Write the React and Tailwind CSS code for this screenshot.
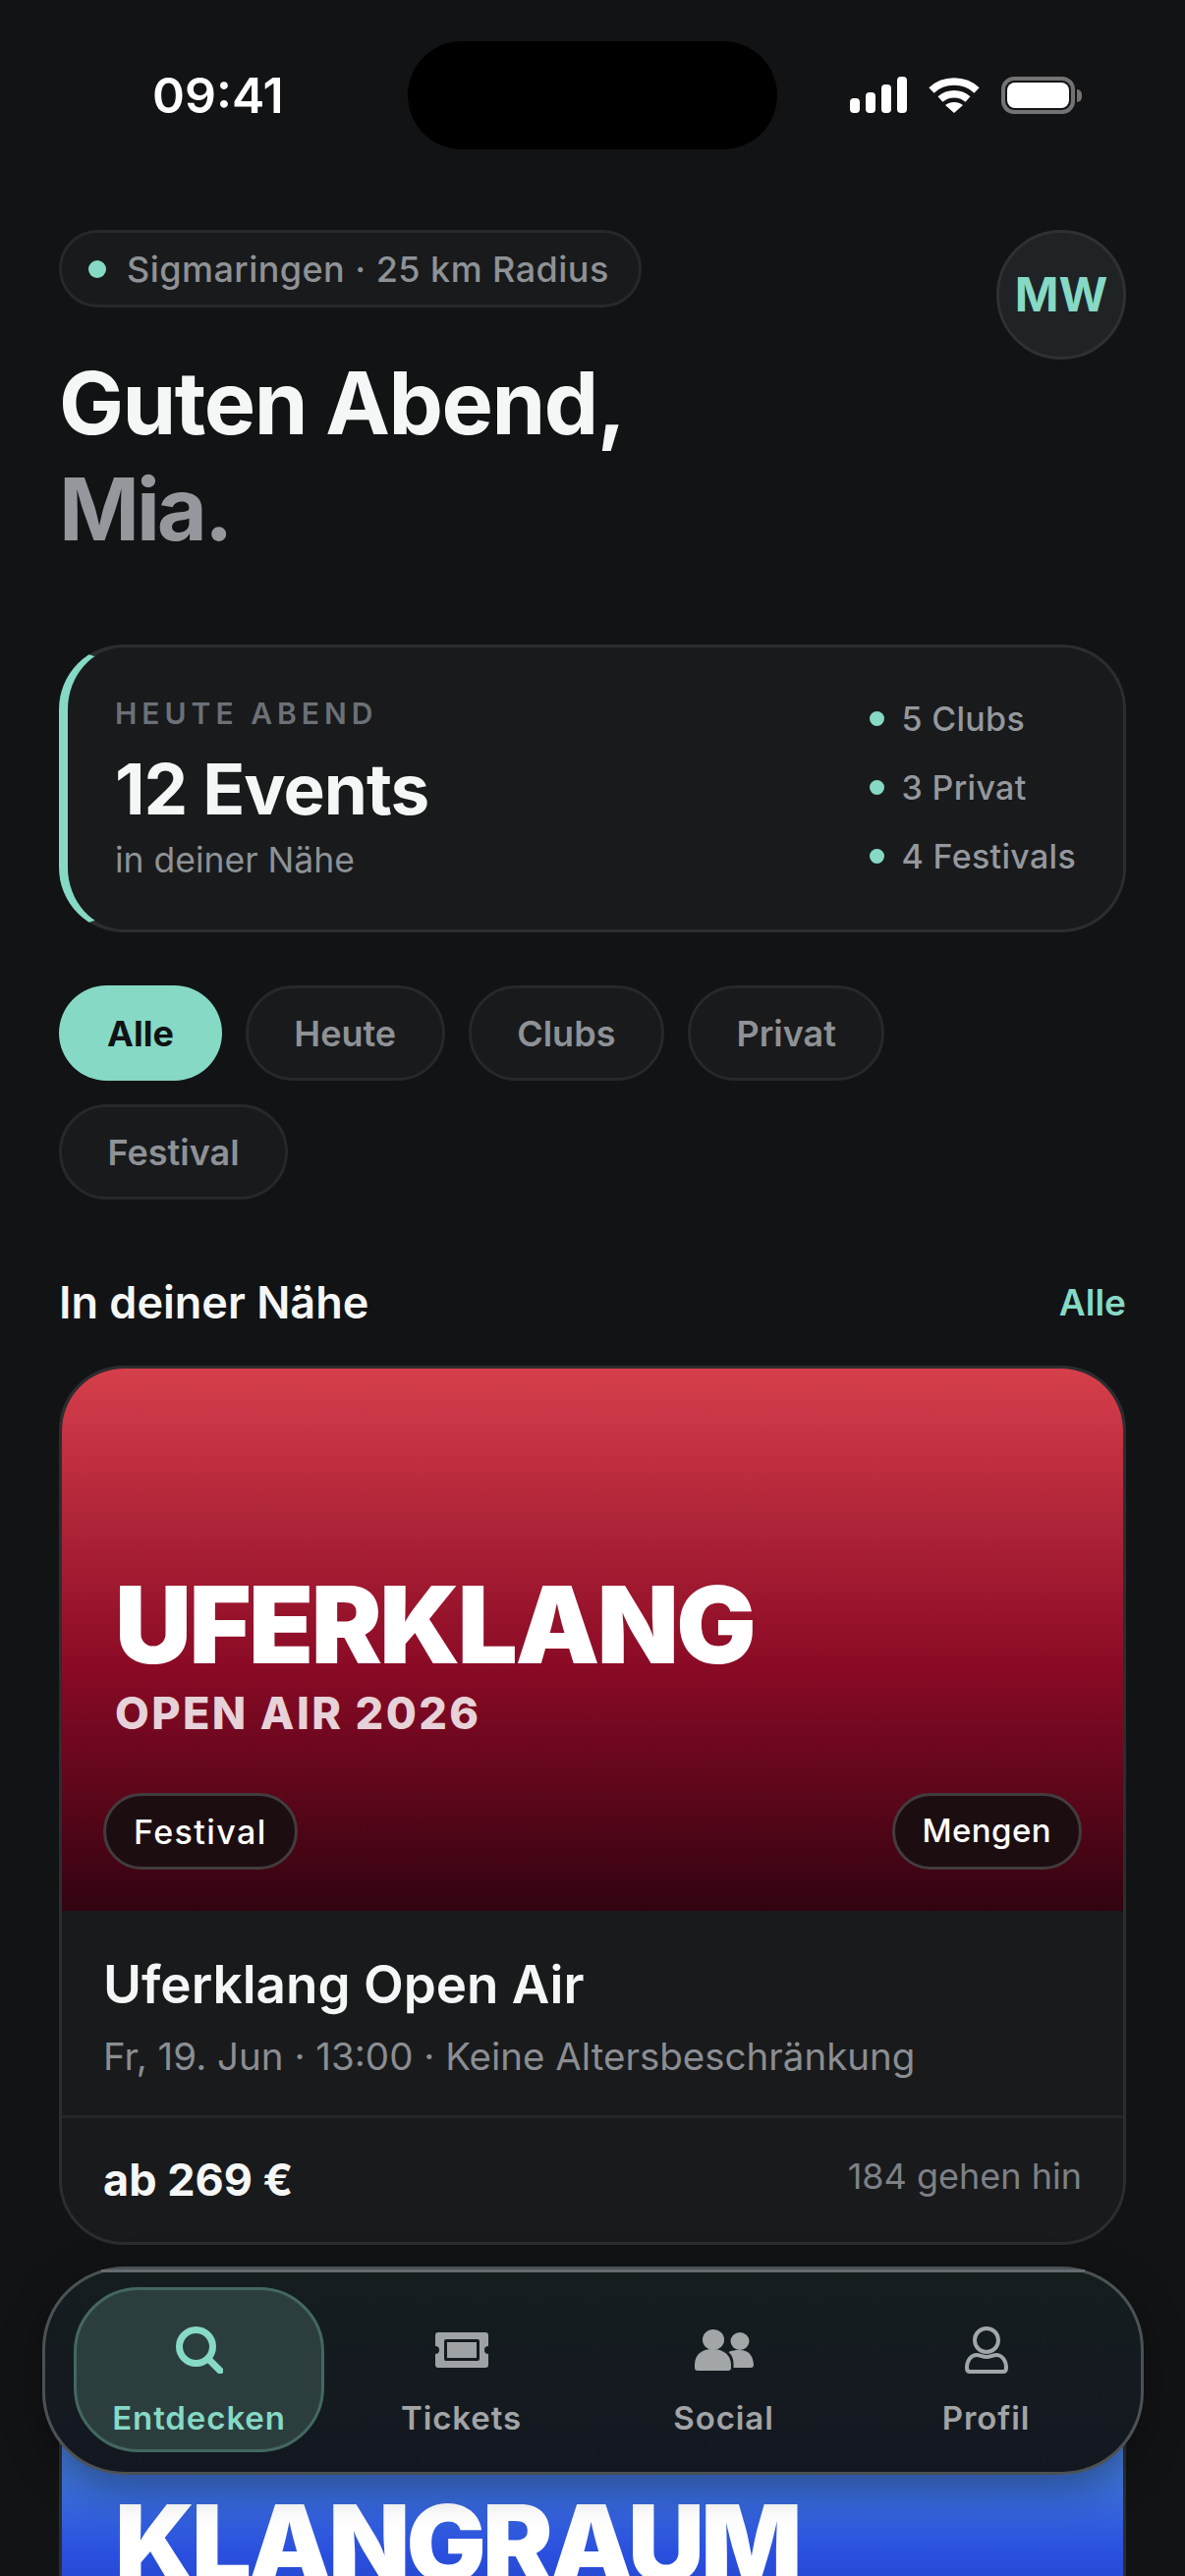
const Dot = ({ c = "w-[15px] h-[15px]" }) => <span className={`block rounded-full bg-[#86d9c5] shrink-0 ${c}`} />;

const Chip = ({ children, active }) => (
  <div className={active
    ? "h-[97px] px-[49px] rounded-full bg-[#86d9c5] text-[#101214] font-bold text-[36px] flex items-center"
    : "h-[97px] px-[46.500px] rounded-full bg-[#191a1c] border-[3px] border-[#26282a] text-[#8e9296] font-semibold text-[36px] flex items-center"}>
    {children}
  </div>
);

const Hero = ({ title, sub, gradient, gap, track }) => (
  <div className={`h-[552px] flex flex-col justify-end px-[54px] ${gradient}`}>
    <div className={`text-white font-black text-[108px] leading-[126px] ${track}`}>{title}</div>
    <div className="text-[#e6d2d8] font-extrabold text-[45px] leading-[54px] tracking-[2.400px]">{sub}</div>
    <div className={`flex justify-between -mx-[12px] mb-[42px] ${gap}`}>
      <span className="h-[78px] px-[28px] flex items-center rounded-full bg-[#1c0d11] border-[3px] border-[#423c3e] text-white font-medium text-[34px] tracking-[1.400px]">Festival</span>
      <span className="h-[78px] px-[28px] flex items-center rounded-full bg-[#1c0d11] border-[3px] border-[#423c3e] text-white font-medium text-[33px] tracking-[0.400px]">Mengen</span>
    </div>
  </div>
);

const Search = () => (
  <svg width="48" height="48" viewBox="0 0 48 48" fill="none" stroke="#86d9c5" strokeWidth="7" strokeLinecap="round">
    <circle cx="20.500" cy="20.500" r="17" />
    <path d="M33 33 L45 45" />
  </svg>
);
const Ticket = () => (
  <svg width="54" height="36" viewBox="0 0 54 36">
    <path fill="#9ea2a5" fillRule="evenodd" d="M3 0h48a3 3 0 0 1 3 3v11a4 4 0 0 0 0 8v11a3 3 0 0 1-3 3H3a3 3 0 0 1-3-3V22a4 4 0 0 0 0-8V3a3 3 0 0 1 3-3Zm8 7a2 2 0 0 0-2 2v18a2 2 0 0 0 2 2h32a2 2 0 0 0 2-2V9a2 2 0 0 0-2-2Z" />
    <rect x="12" y="10" width="30" height="16" fill="#9ea2a5" />
  </svg>
);
const Social = () => (
  <svg width="60" height="42" viewBox="0 0 60 42" fill="#a2a6a8">
    <ellipse cx="19" cy="10.500" rx="11" ry="10.500" />
    <ellipse cx="46" cy="12" rx="9.500" ry="9" />
    <path d="M0 36c0-10 7-16 18-16s19 6 19 16v3a3 3 0 0 1-3 3H3a3 3 0 0 1-3-3Z" />
    <path d="M39.500 39V35c0-5-1.500-9-5-12 3-1.500 7-2 11-2 9 0 14 5 14.500 15a3 3 0 0 1-3 3Z" />
  </svg>
);
const Profil = () => (
  <svg width="44" height="48" viewBox="0 0 44 48" fill="none" stroke="#a2a6a8" strokeWidth="4" strokeLinejoin="round">
    <ellipse cx="22" cy="14" rx="12" ry="12" />
    <path d="M22 31c4 0 7-2 10-2 6 0 10 6 10 13 0 3-1 4-3 4H5c-2 0-3-1-3-4 0-7 4-13 10-13 3 0 6 2 10 2Z" />
  </svg>
);

const NavItem = ({ icon, label, active, shift }) => (
  <div className={active
    ? "w-[255px] h-[168px] rounded-[66px] bg-[#2b3e3d] border-[3px] border-[#43685f] flex flex-col items-center pt-[37px] shrink-0"
    : `w-[267px] h-[168px] flex flex-col items-center pt-[40px] shrink-0 ${shift || ""}`}>
    <div className="h-[48px] flex items-center justify-center">{icon}</div>
    <div className={`mt-[25px] text-[33px] leading-[40px] font-semibold tracking-[0.9px] ${active ? "text-[#86d9c5]" : "text-[#a2a4a6]"}`}>{label}</div>
  </div>
);

export default function App() {
  return (
    <div className="relative w-[1206px] h-[2622px] overflow-hidden bg-[#111315] font-[Inter,sans-serif]">
      {/* status bar */}
      <div className="flex items-center pt-[42px]">
        <div className="w-[415px] pl-[155px] text-white text-[50px] font-semibold leading-[60px]">09:41</div>
        <div className="w-[376px] h-[110px] rounded-full bg-black" />
        <div className="ml-[74px] flex items-center">
          <svg width="58" height="38" viewBox="0 0 58 38" fill="#fff">
            <rect x="0" y="22" width="10" height="15" rx="4" />
            <rect x="16" y="16" width="10" height="21" rx="4" />
            <rect x="32" y="8" width="10" height="29" rx="4" />
            <rect x="48" y="0" width="10" height="37" rx="4" />
          </svg>
          <svg className="ml-[22px]" width="52" height="38" viewBox="0 0 52 38" fill="none">
            <path d="M3 14C15 2 37 2 49 14" stroke="#fff" strokeWidth="7.500" />
            <path d="M12 23c8-7 20-7 28 0" stroke="#fff" strokeWidth="7.500" />
            <path d="M26 37 L17 29 C22 25 30 25 35 29 Z" fill="#fff" />
          </svg>
          <div className="ml-[22px] w-[75px] h-[38px] rounded-[13px] border-[4px] border-[#737373] p-[2px]">
            <div className="w-full h-full rounded-[8px] bg-white" />
          </div>
          <div className="ml-[2px] w-[5px] h-[13px] rounded-r-full bg-[#737373]" />
        </div>
      </div>

      <div className="px-[60px] pt-[82px]">
        {/* header */}
        <div className="flex justify-between items-start">
          <div>
            <div className="inline-flex items-center h-[79px] rounded-full bg-[#191a1c] border-[3px] border-[#26282a] pl-[27px] pr-[30px]">
              <Dot c="w-[18px] h-[18px]" />
              <span className="ml-[21px] text-[#8e9296] text-[36px] font-medium whitespace-nowrap tracking-[0.450px]">Sigmaringen · 25 km Radius</span>
            </div>
            <div className="mt-[43px] text-[88px] leading-[108px] font-bold tracking-[-1.480px] text-[#f5f6f6]">
              Guten Abend,<br /><span className="text-[#94989d] tracking-[-3px]">Mia.</span>
            </div>
          </div>
          <div className="w-[132px] h-[132px] rounded-full bg-[#1f2326] border-[3px] border-[#2e3134] flex items-center justify-center text-[#86d9c5] text-[48px] font-bold">MW</div>
        </div>

        {/* summary */}
        <div className="mt-[84px] h-[293px] rounded-[66px] bg-[#191a1c] border-[3px] border-[#2b2d30] border-l-[9px] border-l-[#86d9c5] flex justify-between pl-[48px] pr-[48px] pt-[50px]">
          <div>
            <div className="text-[#6b7177] text-[30px] leading-[34px] font-semibold tracking-[5px]">HEUTE ABEND</div>
            <div className="mt-[20px] text-[#f5f6f6] text-[71px] leading-[80px] font-bold tracking-[-1px]">12 Events</div>
            <div className="mt-[11px] text-[#8e9296] text-[35.500px] leading-[44px]">in deiner Nähe</div>
          </div>
          <div className="flex flex-col gap-[30px] pt-[2px]">
            {["5 Clubs", "3 Privat", "4 Festivals"].map((t) => (
              <div key={t} className="flex items-center h-[40px]">
                <Dot />
                <span className="ml-[18px] text-[#94989d] text-[34px] font-medium tracking-[0.3px]">{t}</span>
              </div>
            ))}
          </div>
        </div>

        {/* chips */}
        <div className="mt-[54px] flex flex-wrap gap-[24px]">
          <Chip active>Alle</Chip>
          <Chip>Heute</Chip>
          <Chip>Clubs</Chip>
          <Chip>Privat</Chip>
          <Chip>Festival</Chip>
        </div>

        {/* section */}
        <div className="mt-[80px] flex justify-between items-center h-[50px]">
          <div className="text-[#f5f6f6] text-[45px] font-semibold">In deiner Nähe</div>
          <div className="text-[#86d9c5] text-[37px] font-semibold">Alle</div>
        </div>

        {/* card 1 */}
        <div className="mt-[39px] rounded-[66px] overflow-hidden bg-[#191a1c] border-[3px] border-[#2b2d30]">
          <Hero title="UFERKLANG" sub="OPEN AIR 2026" gap="mt-[54px]" track="tracking-[-2.500px]" gradient="bg-[linear-gradient(180deg,#d63f4b_0%,#8a0a25_55%,#320310_100%)]" />
          <div className="px-[42px] pt-[43px] h-[211px] border-b-[3px] border-[#232527]">
            <div className="text-[#f5f6f6] text-[53px] leading-[64px] font-semibold">Uferklang Open Air</div>
            <div className="mt-[17px] text-[#8a8e92] text-[38.500px] leading-[48px]">Fr, 19. Jun · 13:00 · Keine Altersbeschränkung</div>
          </div>
          <div className="px-[42px] h-[126px] flex justify-between items-center">
            <div className="text-[#f5f6f6] text-[45px] font-bold">ab 269 €</div>
            <div className="text-[#7d8186] text-[36px] -mt-[8px]">184 gehen hin</div>
          </div>
        </div>

        {/* card 2 */}
        <div className="mt-[24px] rounded-[66px] overflow-hidden bg-[#191a1c] border-[3px] border-[#2b2d30]">
          <Hero title="KLANGRAUM" sub="CLUB NIGHT" gap="mt-[38px]" track="tracking-[-3.900px]" gradient="bg-[linear-gradient(180deg,#6da0e0_0%,#3d73d8_38%,#2a4fdf_52%,#14206a_100%)]" />
        </div>
      </div>

      {/* tab bar */}
      <div className="absolute left-[43px] top-[2307px] w-[1121px] h-[212px] rounded-[84px] bg-[linear-gradient(180deg,#151d1f_0%,#131820_100%)] border-[3px] border-[#4b5154] flex pl-[29px] pt-[18px] shadow-[0_12px_40px_rgba(0,0,0,0.35)]">
        <div className="absolute left-[57px] right-[57px] top-0 h-[3px] bg-[#656b6e]" />
        <NavItem active icon={<Search />} label="Entdecken" />
        <NavItem shift="ml-[6px]" icon={<Ticket />} label="Tickets" />
        <NavItem icon={<Social />} label="Social" />
        <NavItem icon={<Profil />} label="Profil" />
      </div>
    </div>
  );
}
